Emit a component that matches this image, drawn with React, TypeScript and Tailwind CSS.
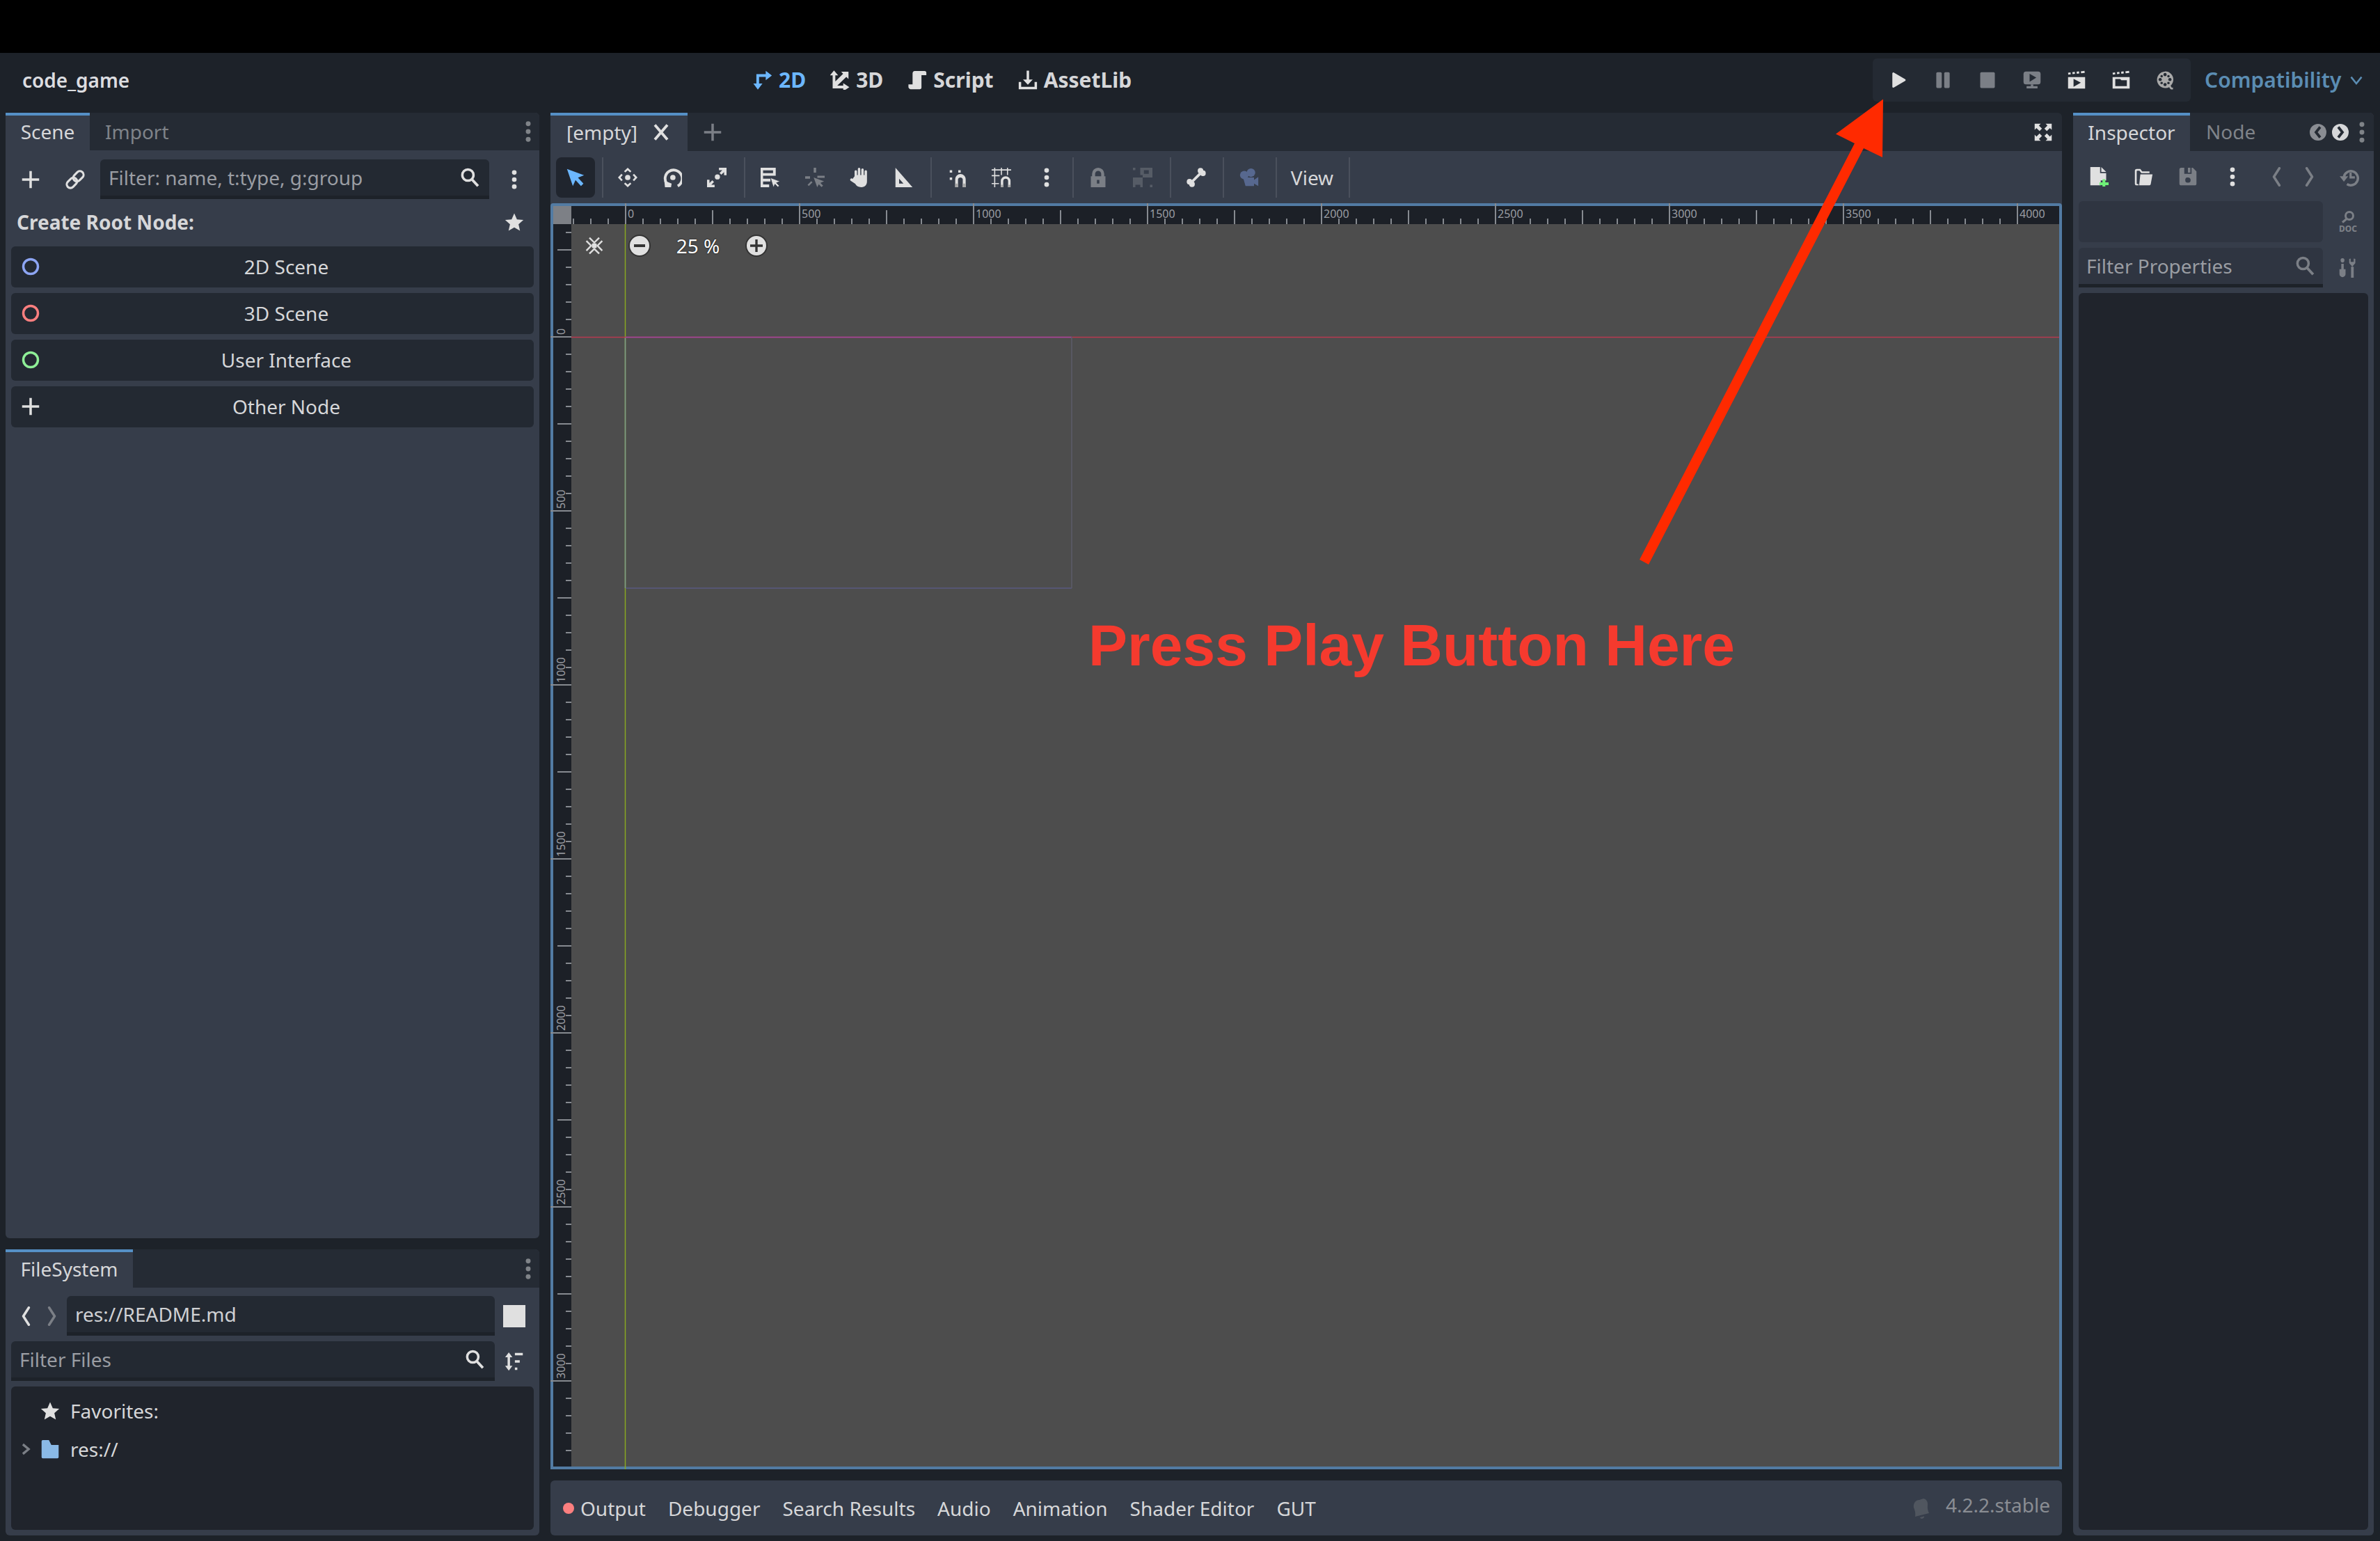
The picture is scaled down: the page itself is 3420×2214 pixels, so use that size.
import React from "react"

const LIGHT = "#e0e0e0"
const DIM = "#7b7f86"

const Ico = ({ children, fill = LIGHT, className = "w-7 h-7" }: { children: React.ReactNode; fill?: string; className?: string }) => (
  <svg viewBox="0 0 16 16" fill={fill} className={"shrink-0 " + className}>{children}</svg>
)

const Plus = ({ fill = LIGHT }: { fill?: string }) => (
  <Ico fill={fill}><path d="M7 1h2v6h6v2H9v6H7V9H1V7h6z" /></Ico>
)
const Kebab = ({ fill = LIGHT }: { fill?: string }) => (
  <Ico fill={fill}><circle cx="8" cy="2.2" r="1.9" /><circle cx="8" cy="8" r="1.9" /><circle cx="8" cy="13.8" r="1.9" /></Ico>
)
const SmallKebab = () => (
  <svg viewBox="0 0 6 24" fill="#7f8388" className="w-[8px] h-[32px] shrink-0"><circle cx="3" cy="3.5" r="2.6" /><circle cx="3" cy="12" r="2.6" /><circle cx="3" cy="20.5" r="2.6" /></svg>
)
const Search = ({ color = LIGHT }: { color?: string }) => (
  <Ico fill="none"><circle cx="6.5" cy="6" r="4.6" stroke={color} strokeWidth="2" /><path d="M9.8 9.6l5 5.4" stroke={color} strokeWidth="2.2" /></Ico>
)
const Star = () => (
  <Ico><path d="M8 .8l2.2 5 5.3.5-4 3.6 1.2 5.3L8 12.4l-4.7 2.8 1.2-5.3-4-3.6 5.3-.5z" /></Ico>
)
const Ring = ({ color }: { color: string }) => (
  <Ico fill="none"><circle cx="8" cy="8" r="6" stroke={color} strokeWidth="2" /></Ico>
)
const ChevL = ({ color = LIGHT, w = 2 }: { color?: string; w?: number }) => (
  <Ico fill="none"><path d="M10.5 1L6 8l4.5 7" stroke={color} strokeWidth={w} strokeLinecap="round" strokeLinejoin="round" /></Ico>
)
const ChevR = ({ color = LIGHT, w = 2 }: { color?: string; w?: number }) => (
  <Ico fill="none"><path d="M5.5 1L10 8l-4.5 7" stroke={color} strokeWidth={w} strokeLinecap="round" strokeLinejoin="round" /></Ico>
)

const Box = ({ children, className = "w-16" }: { children: React.ReactNode; className?: string }) => (
  <div className={"flex items-center justify-center shrink-0 " + className}>{children}</div>
)
const Sep = ({ className = "ml-[6px] mr-[4px]" }: { className?: string }) => (
  <div className={"w-[2px] h-[58px] bg-[#4a505c] shrink-0 " + className} />
)

const TopLink = ({ icon, label, active }: { icon: React.ReactNode; label: string; active?: boolean }) => (
  <div className={"flex items-center gap-[9px] font-bold text-[30px] " + (active ? "text-[#6cb7ff]" : "text-[#d6d7d9]")}>
    {icon}
    <span>{label}</span>
  </div>
)

const TitleBar = () => (
  <div className="flex items-center h-[86px] pb-2 shrink-0 relative">
    <div className="w-[1082px] pl-[32px] font-semibold text-[#dcdde0] shrink-0">code_game</div>
    <div className="flex items-center gap-[35px]">
      <TopLink active label="2D" icon={
        <Ico fill="#6cb7ff"><path d="M2.8 11.5V3.2h8.2v2.2H5v6.1zM10.5.4L15.5 4.3l-5 3.9zM.3 10.8h7.500L4 15.800z" /></Ico>
      } />
      <TopLink label="3D" icon={
        <Ico><path d="M2 4h2.2v5.2L10.6 2.8 9 1.2h6v6l-1.8-1.8-7.4 7.2h4.9v-2l5 3.2-5 3.4v-2.4H2zM3.1.2L6.5 4.2H-.3z" /></Ico>
      } />
      <TopLink label="Script" icon={
        <Ico><path d="M6 .5h8a1.5 1.5 0 0 1 1.5 1.5v2h-4v10a1.5 1.5 0 0 1-1.5 1.5H2.5A2 2 0 0 1 .8 14v-2.5h3.4V2.4A2 2 0 0 1 6 .5z" /></Ico>
      } />
      <TopLink label="AssetLib" icon={
        <Ico><path d="M7 .3h2v7.2h3L8 11.8 4 7.5h3zM.5 9.5h2v4h11v-4h2v6H.5z" /></Ico>
      } />
    </div>
    <div className="flex-1" />
    <div className="absolute left-[2691px] top-[8px] w-[457px] h-[62px] rounded-md bg-[#242a33] flex items-center pl-[5px]">
      <Box><Ico><path d="M3 2.5v11a.8.8 0 0 0 1.2.6l9.3-5.4a.8.8 0 0 0 0-1.4L4.2 1.9A.8.8 0 0 0 3 2.5z" /></Ico></Box>
      <Box><Ico fill={DIM}><rect x="2.5" y="1.5" width="4.5" height="13" rx="1" /><rect x="9" y="1.5" width="4.5" height="13" rx="1" /></Ico></Box>
      <Box><Ico fill={DIM}><rect x="2" y="1.5" width="12" height="13" rx="1" /></Ico></Box>
      <Box><Ico fill={DIM}><rect x="1" y="1" width="14" height="10.5" rx="2" /><path d="M6 2.8v6.6L11.5 6z" fill="#242a33" /><path d="M7 11.5h2v1.5h3.5v1.8h-9V13H7z" /></Ico></Box>
      <Box><Ico><path d="M1 2l2-.3.2 1.6-2 .3zM4.5 1.6l2-.3.2 1.6-2 .3zM8 1.2l2-.3.2 1.6-2 .3zM11.5.8l3-.4.2 1.7-3 .3zM1 5.5h14V15H1z" /><path d="M5.5 7v6.5L11.5 10.2z" fill="#242a33" /></Ico></Box>
      <Box><Ico><path d="M1 2l2-.3.2 1.6-2 .3zM4.5 1.6l2-.3.2 1.6-2 .3zM8 1.2l2-.3.2 1.6-2 .3zM11.5.8l3-.4.2 1.7-3 .3zM1 5.5h14V15H1z" /><path d="M3.2 7.2h4l1 1h4.500v4.800H3.200z" fill="#242a33" /></Ico></Box>
      <Box><Ico fill="#a9a9a9"><path d="M7.5.8a6.8 6.8 0 0 1 6.8 6.8c0 2-.8 3.7-2.2 5l.6 1.2c.2.4.6.5 1.3.4v1.5c-1.200.2-2.100-.1-2.600-1l-.5-.9a6.800 6.800 0 1 1-3.400-12.800z" /><g fill="#242a33"><circle cx="7.5" cy="3.5" r="1.3" /><circle cx="7.5" cy="11.7" r="1.3" /><circle cx="3.5" cy="7.6" r="1.3" /><circle cx="11.5" cy="7.6" r="1.3" /><circle cx="4.7" cy="4.8" r="1" /><circle cx="10.3" cy="4.8" r="1" /><circle cx="4.7" cy="10.4" r="1" /><circle cx="10.3" cy="10.4" r="1" /></g></Ico></Box>
    </div>
    <div className="absolute left-[3168px] top-0 h-[78px] flex items-center gap-[12px] font-semibold text-[30px] text-[#5b8db3]">
      <span>Compatibility</span>
      <svg viewBox="0 0 16 16" fill="none" className="w-5 h-5"><path d="M2 4.5l6 7.5 6-7.5" stroke="#5b8db3" strokeWidth="2" /></svg>
    </div>
  </div>
)

const Tab = ({ label, width }: { label: string; width: string }) => (
  <div className={"h-full bg-[#363d4a] border-t-[4px] border-[#5590c6] pb-[4px] flex items-center justify-center text-[#d6d7d9] shrink-0 " + width}>{label}</div>
)

const Field = ({ className, text, dim, icon }: { className: string; text: string; dim?: boolean; icon?: React.ReactNode }) => (
  <div className={"h-full rounded-t-md border-b-[5px] border-[#1d2229] flex items-center shrink-0 " + className}>
    <span className={"flex-1 " + (dim ? "text-[#9a9da3]" : "text-[#d0d1d4]")}>{text}</span>
    {icon}
  </div>
)

const RootBtn = ({ icon, label }: { icon: React.ReactNode; label: string }) => (
  <div className="h-[59px] rounded-md bg-[#232932] flex items-center relative shrink-0">
    <div className="absolute left-[14px] top-[15px]">{icon}</div>
    <div className="flex-1 text-center pl-[40px] pb-[2px] text-[#d6d7d9]">{label}</div>
  </div>
)

const ScenePanel = () => (
  <div className="h-[1617px] bg-[#363d4a] rounded-md flex flex-col shrink-0">
    <div className="h-[54px] bg-[#252b34] rounded-t-md flex items-center shrink-0">
      <Tab label="Scene" width="w-[121px]" />
      <span className="ml-[22px] text-[#7f8389]">Import</span>
      <div className="flex-1" />
      <div className="mr-[12px]"><SmallKebab /></div>
    </div>
    <div className="h-[57px] mt-[13px] flex items-center shrink-0">
      <Box className="w-16 ml-[4px]"><Plus /></Box>
      <Box className="w-16 mr-[4px]">
        <Ico fill="none"><g transform="rotate(-45 8 8)" stroke={LIGHT} strokeWidth="1.8"><rect x="-.5" y="5" width="9.5" height="6" rx="3" /><rect x="7" y="5" width="9.5" height="6" rx="3" /></g></Ico>
      </Box>
      <Field className="w-[559px] bg-[#232932] pl-[12px] pr-[14px]" text="Filter: name, t:type, g:group" dim icon={<Search />} />
      <Box className="w-[72px]"><Kebab /></Box>
    </div>
    <div className="h-[68px] pb-[2px] flex items-center justify-between pl-[16px] pr-[22px] font-bold text-[#d6d7d9] shrink-0">
      <span>Create Root Node:</span>
      <Star />
    </div>
    <div className="flex flex-col gap-2 px-2">
      <RootBtn label="2D Scene" icon={<Ring color="#8da5f3" />} />
      <RootBtn label="3D Scene" icon={<Ring color="#fc7f7f" />} />
      <RootBtn label="User Interface" icon={<Ring color="#8eef97" />} />
      <RootBtn label="Other Node" icon={<Plus />} />
    </div>
  </div>
)

const FileSystemPanel = () => (
  <div className="flex-1 bg-[#363d4a] rounded-md flex flex-col min-h-0">
    <div className="h-[55px] bg-[#252b34] rounded-t-md flex items-center justify-between shrink-0">
      <Tab label="FileSystem" width="w-[183px]" />
      <div className="mr-[12px]"><SmallKebab /></div>
    </div>
    <div className="h-[57px] mt-[12px] flex items-center shrink-0">
      <Box className="w-[42px] ml-[8px] -mr-[4px]"><ChevL /></Box>
      <Box className="w-[42px]"><ChevR color={DIM} /></Box>
      <Field className="w-[615px] bg-[#232932] pl-[12px]" text="res://README.md" />
      <Box className="w-[56px]"><div className="w-8 h-8 bg-[#e0e0e0]" /></Box>
    </div>
    <div className="h-[57px] mt-[8px] flex items-center pl-2 shrink-0">
      <Field className="w-[695px] bg-[#232932] pl-[12px] pr-[15px]" text="Filter Files" dim icon={<Search />} />
      <Box className="w-[56px]">
        <Ico><path d="M3.5.5l3 4h-2v7h2l-3 4-3-4h2v-7h-2zM8.5 1H15v2H8.500zM8.500 7h4v2h-4zM8.500 13h2v2h-2z" /></Ico>
      </Box>
    </div>
    <div className="flex-1 mx-2 mt-2 mb-2 rounded-md bg-[#20242c] pt-[7px] text-[#d6d7d9]">
      <div className="h-[55px] flex items-center pl-[42px] gap-[15px]">
        <Star />
        <span>Favorites:</span>
      </div>
      <div className="h-[55px] flex items-center pl-[10px]">
        <svg viewBox="0 0 16 16" fill="none" className="w-[22px] h-[22px] mr-[10px]"><path d="M5 3l6 5-6 5" stroke={DIM} strokeWidth="2.4" /></svg>
        <Ico fill="#8ab9e6"><path d="M1 1.5a1 1 0 0 1 1-1h5l2 4h6v10a1 1 0 0 1-1 1H2a1 1 0 0 1-1-1z" /></Ico>
        <span className="ml-[15px]">res://</span>
      </div>
    </div>
  </div>
)

const CANVAS_X = Array.from({ length: 84 }, (_, i) => 824 + i * 25)
const CANVAS_Y = Array.from({ length: 72 }, (_, i) => 334 + i * 25)
const H_LABELS = [0, 500, 1000, 1500, 2000, 2500, 3000, 3500, 4000]
const V_LABELS = [0, 500, 1000, 1500, 2000, 2500, 3000]

const Rulers = () => (
  <svg viewBox="791 292 2172 1819" className="absolute inset-0 w-full h-full">
    <rect x="795" y="296" width="2164" height="26" fill="#1c2027" />
    <rect x="795" y="296" width="26" height="1811" fill="#1c2027" />
    <rect x="795" y="296" width="26" height="26" fill="#7d8086" />
    {CANVAS_X.filter((x) => x > 821 && x < 2958).map((x) => {
      const k = (x - 899) / 25
      const y1 = k % 10 === 0 ? 292 : k % 5 === 0 ? 302 : 314
      return <line key={x} x1={x} x2={x} y1={y1} y2={322} stroke="#868a90" strokeWidth="2" />
    })}
    {CANVAS_Y.filter((y) => y < 2105).map((y) => {
      const k = Math.round((y - 484) / 25)
      const x1 = k % 10 === 0 ? 791 : k % 5 === 0 ? 801 : 813
      return <line key={y} y1={y} y2={y} x1={x1} x2={821} stroke="#868a90" strokeWidth="2" />
    })}
    {H_LABELS.map((n, i) => (
      <text key={n} x={902 + i * 250} y={313} fontSize="16" fill="#9a9da3">{n}</text>
    ))}
    {V_LABELS.map((n, i) => (
      <text key={n} transform={`translate(812 ${481 + i * 250}) rotate(-90)`} fontSize="16" fill="#9a9da3">{n}</text>
    ))}
    <line x1="898.5" x2="898.5" y1="322" y2="2111" stroke="#88a623" strokeWidth="1.5" />
    <line x1="898.5" x2="898.5" y1="484" y2="845" stroke="#7d9a8c" strokeWidth="1.5" />
    <line x1="821" x2="2959" y1="484.5" y2="484.5" stroke="#b83a50" strokeWidth="1.5" />
    <line x1="899" x2="1540" y1="484.5" y2="484.5" stroke="#a0489e" strokeWidth="1.5" />
    <line x1="899" x2="1540" y1="845" y2="845" stroke="#5a5a80" strokeWidth="1.5" />
    <line x1="1540" x2="1540" y1="484" y2="845" stroke="#5c5c6a" strokeWidth="1.5" />
  </svg>
)

const Toolbar = () => (
  <div className="h-[75px] flex items-center pl-[8px] shrink-0">
    <div className="w-[56px] h-[58px] rounded-lg bg-[#20252e] flex items-center justify-center shrink-0">
      <Ico fill="#6cb7ff"><path d="M1 1l14 5.2-5 2 4.5 4.8-2 2L8 10.2 5.8 15z" /></Ico>
    </div>
    <Sep className="ml-[10px] mr-[3px]" />
    <Box>
      <Ico><circle cx="8" cy="8" r="2.2" /><path d="M8 0l3 2.8-1 1.100-2-1.800-2 1.800-1-1.100zM8 16l3-2.800-1-1.100-2 1.800-2-1.800-1 1.100zM0 8l2.800-3 1.100 1-1.800 2 1.800 2-1.100 1zM16 8l-2.800-3-1.100 1 1.800 2-1.800 2 1.100 1z" /></Ico>
    </Box>
    <Box>
      <Ico fill="none"><circle cx="8.5" cy="8" r="2.2" fill={LIGHT} /><path d="M12.5 15A7 7 0 1 0 3.5 13" stroke={LIGHT} strokeWidth="2.2" /><path d="M1.5 10.5l6 2.5-.5 3H2z" fill={LIGHT} /></Ico>
    </Box>
    <Box>
      <Ico><circle cx="8.5" cy="7.5" r="2.1" /><path d="M9.8 0H16v6.2h-2V3.500l-2.300 2.200-1.400-1.400L12.500 2H9.800zM6.200 16H0V9.800h2v2.700l2.300-2.200 1.400 1.400L3.500 14h2.700z" /></Ico>
    </Box>
    <Sep className="ml-[7px] mr-[4px]" />
    <Box>
      <Ico><path d="M0 0h12.400v6.600H2V9h6v2.300H2v2.400h5V16H0zM2 2.200v2.200h8.200V2.200z" /><path d="M8 8.200l8 3-3 1.200 2.400 2.400-1.300 1.100-2.300-2.400-1.300 2.700z" stroke="#363d4a" strokeWidth=".5" /></Ico>
    </Box>
    <Box>
      <Ico fill={DIM}><path d="M7 0h2v4H7zM0 7h4v2H0zM10 6.500h6v1.800h-6zM7 8l8.500 3.200-3 1.200 2.200 2.300-1.300 1.200-2.200-2.300-1.300 2.400z" /><path d="M2 14l3-3 1 1-3 3z" /></Ico>
    </Box>
    <Box>
      <Ico><path d="M4 7V3a1 1 0 0 1 2 0V6h.7V1a1 1 0 0 1 2 0v5h.8V1.500a1 1 0 0 1 2 0V6h.7V3a1 1 0 0 1 2 0v8c0 3-1.500 5-4.700 5-2.500 0-3.800-.9-5-2.800L.6 10.500c-.8-1.300.8-2.500 1.800-1.400z" /></Ico>
    </Box>
    <Box>
      <Ico><path d="M1 0l14 16H1zM4 9v4h3.600z" fillRule="evenodd" /></Ico>
    </Box>
    <Sep className="mx-[6px]" />
    <Box>
      <Ico><path d="M1 2h2v2H1zM8 2h2v2H8zM1 8h2v2H1z" /><path d="M5.5 16V9.500a4.300 4.300 0 0 1 8.600 0V16h-2.400V9.500a2 2 0 0 0-3.900 0V16z" /><path d="M5.500 13h2.300v3H5.500zM11.700 13h2.400v3h-2.400z" fill="#a8a8a8" /></Ico>
    </Box>
    <Box className="w-[60px]">
      <Ico fill="none">
        <path d="M2.500 0v16M8 0v6M13 0v6M0 1.800h16M0 6.500h6.500M0 13h6" stroke={LIGHT} strokeWidth=".9" />
        <path d="M7.500 16V11a4 4 0 0 1 8 0v5h-2v-5a2 2 0 0 0-4 0v5z" fill={LIGHT} />
        <path d="M7.500 14h2v2h-2zM13.500 14h2v2h-2z" fill="#a8a8a8" />
      </Ico>
    </Box>
    <Box className="w-[69px]"><Kebab /></Box>
    <Sep className="mx-[3px]" />
    <Box>
      <Ico fill={DIM}><path d="M3 7V5a5 5 0 0 1 10 0v2h1v9H2V7zm2.500 0h5V5a2.500 2.500 0 0 0-5 0zM7 10v3h2v-3z" fillRule="evenodd" /></Ico>
    </Box>
    <Box>
      <Ico fill="#565c66"><path d="M0 0h2v2H0zM6 8H0v8h2v-2h4v2h2V8zM6 0h10v8H8V6H6zM9 2v3h4V2zM14 14h2v2h-2z" fillRule="evenodd" /></Ico>
    </Box>
    <Sep className="ml-[7px] mr-[4px]" />
    <Box>
      <Ico fill={LIGHT}>
        <path d="M4 10.500L10.500 4 12 5.500 5.500 12z" />
        <circle cx="11.500" cy="2.500" r="2.300" /><circle cx="13.500" cy="4.500" r="2.300" />
        <circle cx="2.500" cy="11.500" r="2.300" /><circle cx="4.500" cy="13.500" r="2.300" />
      </Ico>
    </Box>
    <Sep />
    <Box>
      <Ico fill="#57688f"><circle cx="4" cy="6" r="3.500" /><circle cx="9.500" cy="4" r="3.500" /><path d="M3 8h9v7H5zM12 10l3.500-2.500V15L12 13z" /></Ico>
    </Box>
    <Sep />
    <Box className="w-[93px]"><span className="text-[#d6d7d9]">View</span></Box>
    <Sep />
  </div>
)

const CanvasPanel = () => (
  <div className="flex-1 flex flex-col min-h-0">
    <div className="h-[55px] bg-[#252b34] rounded-t-md flex items-center shrink-0">
      <div className="w-[197px] h-full bg-[#363d4a] border-t-[4px] border-[#5590c6] pb-[4px] flex items-center pl-[23px] text-[#d6d7d9] shrink-0">
        <span>[empty]</span>
        <svg viewBox="0 0 16 16" fill="none" className="w-6 h-6 ml-[22px]"><path d="M2 1l12 14M14 1L2 15" stroke={LIGHT} strokeWidth="2.6" /></svg>
      </div>
      <div className="ml-[22px]"><Plus fill={DIM} /></div>
      <div className="flex-1" />
      <div className="mr-[13px]">
        <Ico><path d="M1 1h5L4.500 2.500 7 5 5 7 2.500 4.500 1 6zM15 1v5l-1.500-1.500L11 7 9 5l2.500-2.500L10 1zM1 15v-5l1.500 1.500L5 9l2 2-2.500 2.500L6 15zM15 15h-5l1.500-1.500L9 11l2-2 2.500 2.500L15 10z" /></Ico>
      </div>
    </div>
    <div className="flex-1 flex flex-col bg-[#363d4a] min-h-0">
      <Toolbar />
      <div className="flex-1 relative bg-[#4d4d4d] border-[4px] border-[#527ba3] rounded-t-[4px] min-h-0">
        <div className="absolute -inset-[4px]"><Rulers /></div>
        <div className="absolute left-[45px] top-[41px] flex items-center h-[32px]">
          <Ico fill={LIGHT}><rect x="6" y="6" width="4" height="4" rx="1" /><path d="M4.500 1L8 4.500 11.500 1l1 1L8 6.300 3.500 2zM4.500 15L8 11.500l3.500 3.500 1-1L8 9.700 3.500 14zM1 4.500L4.500 8 1 11.500l1 1L6.300 8 2 3.500zM15 4.500L11.500 8l3.500 3.500-1 1L9.700 8 14 3.500z" /></Ico>
          <div className="ml-[35px] w-[32px] h-[32px] rounded-full bg-[#e0e0e0] border-2 border-[#333] flex items-center justify-center">
            <div className="w-[16px] h-[4px] bg-[#333]" />
          </div>
          <span className="w-[136px] text-center text-white [text-shadow:0_0_2px_#000]">25 %</span>
          <div className="w-[32px] h-[32px] rounded-full bg-[#e0e0e0] border-2 border-[#333] flex items-center justify-center">
            <svg viewBox="0 0 16 16" fill="#333" className="w-[18px] h-[18px]"><path d="M6.500 0h3v6.500H16v3H9.500V16h-3V9.500H0v-3h6.500z" /></svg>
          </div>
        </div>
      </div>
    </div>
  </div>
)

const BottomBar = () => (
  <div className="h-[79px] bg-[#363d4a] rounded-md flex items-center pl-[18px] pr-[17px] shrink-0 text-[#d6d7d9]">
    <div className="w-4 h-4 rounded-full bg-[#fc7f7f] mr-[9px] shrink-0" />
    <div className="flex items-center gap-[32px]">
      <span>Output</span>
      <span>Debugger</span>
      <span>Search Results</span>
      <span>Audio</span>
      <span>Animation</span>
      <span>Shader Editor</span>
      <span>GUT</span>
    </div>
    <div className="flex-1" />
    <div className="flex items-center gap-[18px] text-[#8a8d93] -mt-[10px]">
      <svg viewBox="0 0 16 16" fill="#50565f" className="w-8 h-8 mt-[10px]"><path d="M9 1c2 .5 3 2 3 4 0 2-.5 3.500 1 6.500L3 14c.5-3.500-.5-5-1-6.500C1.500 5 3 2 6 2zM6.500 14.500l3-.7c.3 1.500-2.500 2.500-3 .7z" /></svg>
      <span>4.2.2.stable</span>
    </div>
  </div>
)

const InspectorPanel = () => (
  <div className="w-[432px] bg-[#363d4a] rounded-md flex flex-col shrink-0">
    <div className="h-[55px] bg-[#252b34] rounded-t-md flex items-center shrink-0">
      <Tab label="Inspector" width="w-[168px]" />
      <span className="ml-[23px] pb-[2px] text-[#7f8389]">Node</span>
      <div className="flex-1" />
      <svg viewBox="0 0 16 16" className="w-[24px] h-[24px]"><circle cx="8" cy="8" r="8" fill="#8a8d93" /><path d="M10 3L6 8l4 5" fill="none" stroke="#252b34" strokeWidth="2.5" /></svg>
      <svg viewBox="0 0 16 16" className="w-[24px] h-[24px] ml-[8px]"><circle cx="8" cy="8" r="8" fill="#d6d7d9" /><path d="M6 3l4 5-4 5" fill="none" stroke="#252b34" strokeWidth="2.5" /></svg>
      <div className="ml-[15px] mr-[13px]"><SmallKebab /></div>
    </div>
    <div className="h-[72px] pt-[2px] flex items-center pl-[5px] shrink-0">
      <Box>
        <Ico><path d="M1 0h8v5h5v6H9.500v4H1z" /><path d="M10 0l4 4h-4z" /><path d="M11 10h2.300v2.500H16v2.300h-2.700V16H11v-1.200H8.500v-2.300H11z" fill="#6fef78" /></Ico>
      </Box>
      <Box>
        <Ico><path d="M1 3a1.500 1.500 0 0 1 1.500-1.500h3L7 3.500h6V5H6.300L4.800 3H3a.5.5 0 0 0-.5.5v9.800c0 .4.3.7.7.7H4V15H2.500A1.500 1.500 0 0 1 1 13.500z" /><path d="M5.500 6h10L14 14.200a1 1 0 0 1-1 .8H4.500z" /></Ico>
      </Box>
      <Box>
        <Ico fill={DIM}><path d="M1 2A1.500 1.500 0 0 1 2.500.5H5v5h6v-5h1l3 3v10a1.500 1.500 0 0 1-1.500 1.500h-11A1.500 1.500 0 0 1 1 13.500zM8 .5h2v4H8zM8 8.500a2.200 2.200 0 1 0 0 4.400 2.200 2.200 0 0 0 0-4.400z" fillRule="evenodd" /></Ico>
      </Box>
      <Box><Kebab /></Box>
      <Box className="w-[62px]"><ChevL color={DIM} /></Box>
      <Box className="w-[34px]"><ChevR color={DIM} /></Box>
      <Box className="w-[80px]">
        <Ico fill="none"><path d="M3.500 8a5.800 5.800 0 1 1 2.500 6" stroke={DIM} strokeWidth="2" /><path d="M0 7.500h7L3.500 12z" fill={DIM} /><path d="M9 4.500v4h3.500" stroke={DIM} strokeWidth="1.8" /></Ico>
      </Box>
    </div>
    <div className="h-[59px] flex items-center pl-2 shrink-0">
      <div className="w-[351px] h-full rounded-md bg-[#2f3541] shrink-0" />
      <div className="w-[72px] flex items-center justify-center">
        <svg viewBox="0 0 34 32" className="w-[34px] h-[32px] overflow-visible"><circle cx="19" cy="7" r="5.500" fill="none" stroke={DIM} strokeWidth="3" /><path d="M15 11.500l-6 5" stroke={DIM} strokeWidth="3" /><text x="17" y="30" textAnchor="middle" fontSize="12" fontWeight="800" fill={DIM}>DOC</text></svg>
      </div>
    </div>
    <div className="h-[57px] mt-[8px] flex items-center pl-2 shrink-0">
      <Field className="w-[351px] bg-[#2f3541] pl-[11px] pr-[12px]" text="Filter Properties" dim icon={<Search color={DIM} />} />
      <Box className="w-[72px]">
        <Ico fill={DIM}><path d="M1 9h5v4a2.500 2.500 0 0 1-5 0zM2.500 4.500h2V9h-2zM3.500 0A1.500 1.500 0 0 1 5 2c0 1-.7 1.500-1.500 1.500S2 3 2 2A1.500 1.500 0 0 1 3.500 0zM10.500 7h2.200v9h-2.200zM9 .5V4l2.500 3L14 4V.5L12.700.3V3h-2.500V.3z" /></Ico>
      </Box>
    </div>
    <div className="flex-1 mx-2 mt-2 mb-2 rounded-md bg-[#20242c]" />
  </div>
)

const PlayArrow = () => (
  <svg viewBox="0 0 3420 2214" className="absolute inset-0 w-full h-full pointer-events-none">
    <path d="M2706 142.500L2638 192.500 2665 206 2356 804 2369 811 2678 213 2705 226z" fill="#ff2a00" />
  </svg>
)

export default function App() {
  return (
    <div className="relative w-[3420px] h-[2214px] overflow-hidden bg-[#1d2229] flex flex-col font-['Noto_Sans',sans-serif] text-[28px] leading-none">
      <div className="h-[76px] bg-black shrink-0" />
      <TitleBar />
      <div className="flex-1 flex min-h-0 px-2 pb-2 gap-4">
        <div className="w-[767px] flex flex-col gap-4 shrink-0">
          <ScenePanel />
          <FileSystemPanel />
        </div>
        <div className="w-[2172px] flex flex-col gap-4 shrink-0">
          <CanvasPanel />
          <BottomBar />
        </div>
        <InspectorPanel />
      </div>
      <PlayArrow />
      <div className="absolute left-[1564px] top-[885px] font-['Liberation_Sans',Arial,sans-serif] font-bold text-[84px] leading-none text-[#f53a2e] whitespace-nowrap">
        Press Play Button Here
      </div>
    </div>
  )
}
